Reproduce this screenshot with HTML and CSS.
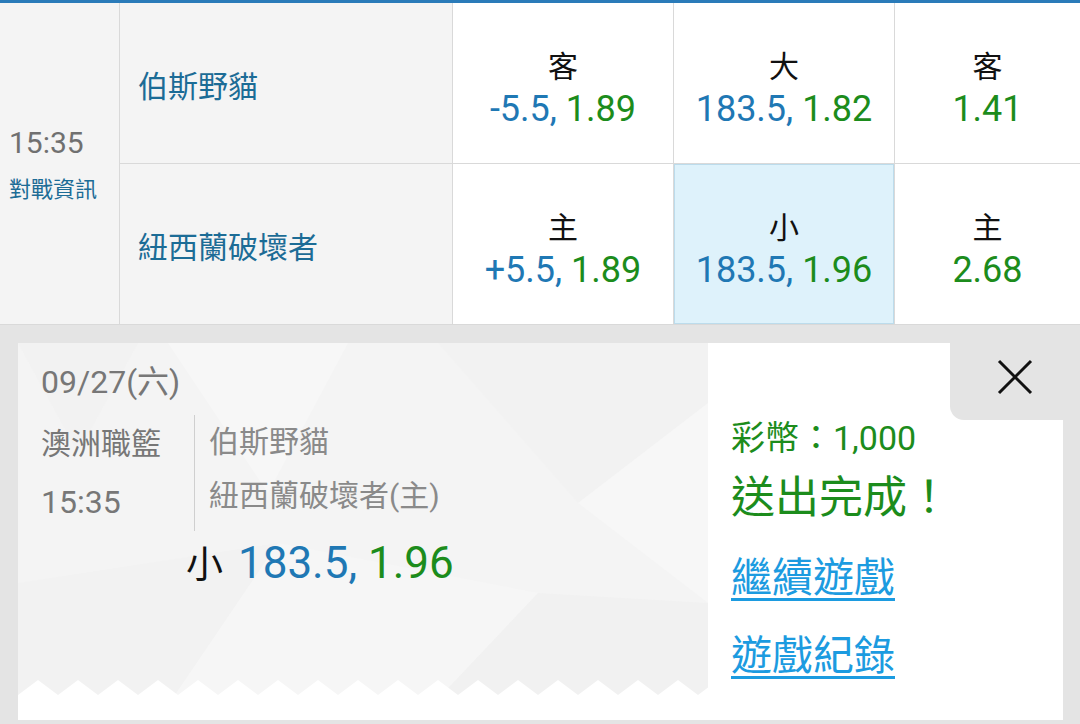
FILE: index.html
```html
<!DOCTYPE html>
<html lang="zh-Hant">
<head>
  <meta charset="UTF-8" />
  <meta name="viewport" content="width=device-width, initial-scale=1.0" />
  <title>投注單</title>
  <link rel="stylesheet" href="styles.css">
</head>
<body>

<div class="odds-grid">
  <div class="cell time-cell">
    <div class="time">15:35</div>
    <div class="info">對戰資訊</div>
  </div>

  <div class="cell team">伯斯野貓</div>
  <div class="cell odd">
    <div class="side">客</div>
    <div class="val"><span class="line">-5.5,</span> <span class="price">1.89</span></div>
  </div>
  <div class="cell odd">
    <div class="side">大</div>
    <div class="val"><span class="line">183.5,</span> <span class="price">1.82</span></div>
  </div>
  <div class="cell odd">
    <div class="side">客</div>
    <div class="val"><span class="price">1.41</span></div>
  </div>

  <div class="cell team">紐西蘭破壞者</div>
  <div class="cell odd">
    <div class="side">主</div>
    <div class="val"><span class="line">+5.5,</span> <span class="price">1.89</span></div>
  </div>
  <div class="cell odd selected">
    <div class="side">小</div>
    <div class="val"><span class="line">183.5,</span> <span class="price">1.96</span></div>
  </div>
  <div class="cell odd">
    <div class="side">主</div>
    <div class="val"><span class="price">2.68</span></div>
  </div>
</div>

<div class="panel">
  <div class="ticket">
    <div class="slip">
      <svg class="slip-bg" viewBox="0 0 690 377" preserveAspectRatio="none" aria-hidden="true">
        <rect x="0" y="0" width="690" height="377" fill="#f4f4f4"/>
        <polygon points="0,0 120,0 60,110" fill="#f2f2f2"/>
        <polygon points="150,0 330,0 250,150" fill="#f7f7f7"/>
        <polygon points="420,0 690,0 690,60 560,160" fill="#f2f2f2"/>
        <polygon points="560,160 690,60 690,260" fill="#f7f7f7"/>
        <polygon points="0,240 260,200 140,377 0,377" fill="#f2f2f2"/>
        <polygon points="260,200 520,250 400,377 140,377" fill="#f6f6f6"/>
        <polygon points="520,250 690,260 690,377 400,377" fill="#f1f1f1"/>
        <path d="M0 352 l20-15 20 15 l20-15 20 15 l20-15 20 15 l20-15 20 15 l20-15 20 15 l20-15 20 15 l20-15 20 15 l20-15 20 15 l20-15 20 15 l20-15 20 15 l20-15 20 15 l20-15 20 15 l20-15 20 15 l20-15 20 15 l20-15 20 15 l20-15 20 15 l20-15 20 15 l20-15 20 15 V377 H0 Z" fill="#fff"/>
      </svg>

      <div class="date">09/27(六)</div>
      <div class="match">
        <div class="league">
          <div>澳洲職籃</div>
          <div>15:35</div>
        </div>
        <div class="teams">
          <div>伯斯野貓</div>
          <div>紐西蘭破壞者(主)</div>
        </div>
      </div>
      <div class="bet">
        <span class="side">小</span>
        <span class="line">183.5,</span> <span class="price">1.96</span>
      </div>
    </div>

    <div class="result">
      <div class="coins">彩幣：1,000</div>
      <div class="done">送出完成！</div>
      <a class="link" href="#">繼續遊戲</a>
      <a class="link" href="#">遊戲紀錄</a>
    </div>

    <button class="close" aria-label="關閉">
      <svg viewBox="0 0 36 36" width="36" height="36">
        <path d="M2 2 L34 34 M34 2 L2 34" stroke="#111" stroke-width="3" fill="none"/>
      </svg>
    </button>
  </div>
</div>

</body>
</html>
```

FILE: styles.css
```css
body {
  margin: 0;
  font-family: Roboto, "Noto Sans CJK TC", sans-serif;
  background: #e4e4e4;
  color: #111;
}

/* === 賠率表 === */
.odds-grid {
  display: grid;
  grid-template-columns: 119px 332px 220px 220px 1fr;
  grid-template-rows: 160px 160px;
  gap: 1px;
  background: #d9d9d9;
  border-top: 3px solid #2a7bb9;
  border-bottom: 1px solid #d9d9d9;
}

.cell {
  background: #fff;
}

.time-cell {
  grid-row: span 2;
  background: #f4f4f4;
  display: flex;
  flex-direction: column;
  justify-content: center;
  padding: 6px 0 0 9px;
}

.time {
  font-size: 30px;
  line-height: 46px;
  color: #707070;
}

.info {
  font-size: 22px;
  line-height: 48px;
  color: #1c6c96;
}

.team {
  background: #f4f4f4;
  display: flex;
  align-items: center;
  padding: 1px 0 0 18px;
  font-size: 30px;
  color: #1c6c96;
}

.odd {
  display: flex;
  flex-direction: column;
  justify-content: center;
  align-items: center;
  padding-top: 9px;
}

.odd .side {
  font-size: 30px;
  line-height: 43px;
}

.odd .val {
  font-size: 36px;
  line-height: 43px;
}

.odd.selected {
  background: #def2fb;
  box-shadow: inset 0 0 0 1px #bcdcec;
}

.line {
  color: #1f78b4;
}

.price {
  color: #1c8c1c;
}

/* === 投注單 === */
.panel {
  padding: 18px 17px 4px 18px;
}

.ticket {
  position: relative;
  display: flex;
  height: 377px;
  background: #fff;
}

.slip {
  position: relative;
  width: 690px;
  padding: 17px 0 0 23px;
  box-sizing: border-box;
  color: #777;
}

.slip-bg {
  position: absolute;
  inset: 0;
  width: 100%;
  height: 100%;
  z-index: 0;
}

.slip > div {
  position: relative;
}

.date {
  font-size: 32px;
  line-height: 44px;
}

.match {
  display: flex;
  margin-top: 11px;
}

.league {
  width: 153px;
  font-size: 30px;
  line-height: 58px;
}

.league div:last-child {
  font-size: 32px;
}

.teams {
  border-left: 1px solid #cfcfcf;
  padding: 0 0 0 14px;
  font-size: 30px;
  line-height: 54px;
  color: #8a8a8a;
}

.bet {
  margin-top: 4px;
  padding-left: 145px;
  font-size: 44px;
  line-height: 56px;
}

.bet .side {
  color: #111;
  font-size: 37px;
  margin-right: 4px;
}

.result {
  flex: 1;
  padding: 73px 0 0 23px;
}

.coins {
  font-size: 34px;
  line-height: 44px;
  color: #1c8c1c;
}

.done {
  margin-top: 8px;
  font-size: 44px;
  line-height: 60px;
  color: #1c8c1c;
}

.link {
  display: table;
  margin-top: 22px;
  font-size: 41px;
  line-height: 56px;
  color: #1c9be0;
  text-decoration: underline;
  text-decoration-thickness: 3px;
  text-underline-offset: 6px;
}

.close {
  position: absolute;
  top: 0;
  right: -17px;
  width: 130px;
  height: 77px;
  padding: 16px 0 0;
  border: none;
  border-bottom-left-radius: 14px;
  background: #e4e4e4;
  cursor: pointer;
  display: flex;
  justify-content: center;
  align-items: flex-start;
}
```
